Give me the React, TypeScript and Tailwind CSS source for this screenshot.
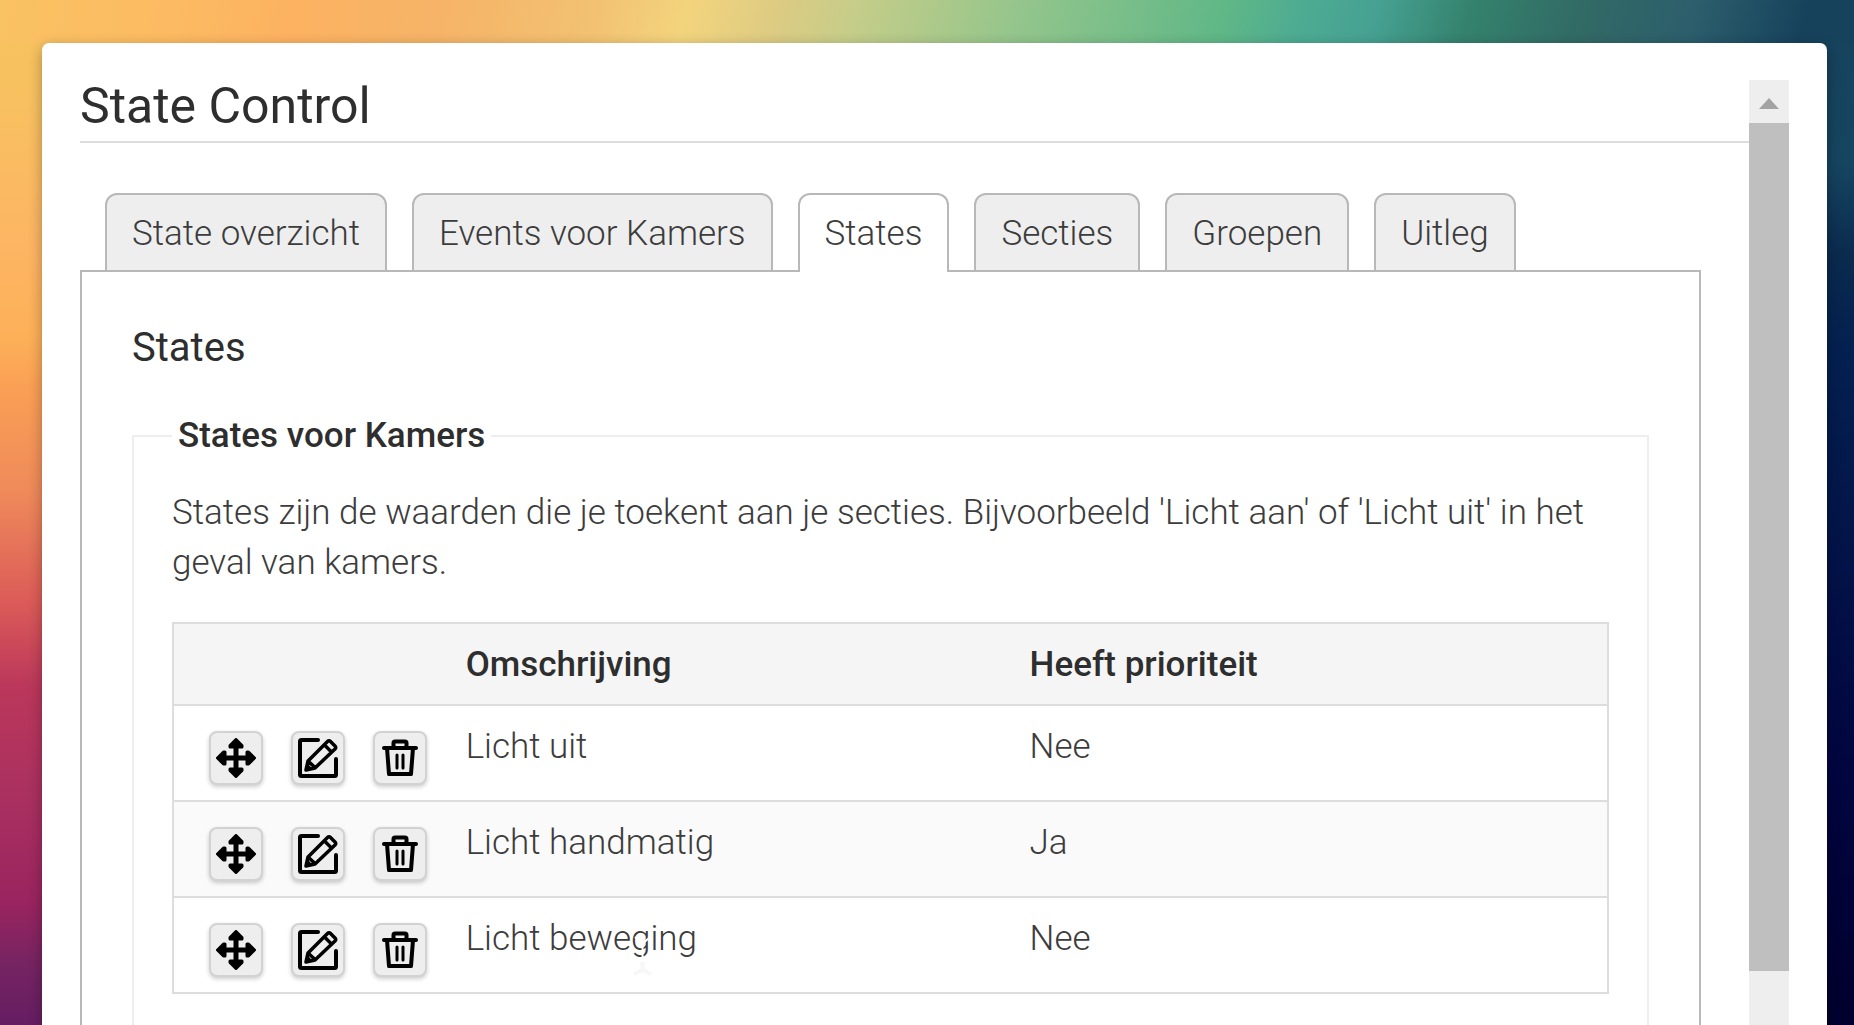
import { useState } from "react";

const tabs = ["State overzicht", "Events voor Kamers", "States", "Secties", "Groepen", "Uitleg"];

const rows = [
  { name: "Licht uit", priority: "Nee", hovered: false },
  { name: "Licht handmatig", priority: "Ja", hovered: false },
  { name: "Licht beweging", priority: "Nee", hovered: true },
];

function MoveIcon() {
  return (
    <svg viewBox="0 0 40 40" className="size-10" aria-hidden="true" strokeLinejoin="round" stroke="#000" strokeWidth="3">
      <path d="M20 4v32M4 20h32" strokeWidth="5" />
      <path d="M20 1.500l6 6v1.500H14V7.500zM20 38.500l6-6V31H14v1.500zM1.500 20l6-6H9v12H7.500zM38.500 20l-6-6H31v12h1.500z" />
    </svg>
  );
}

function EditIcon() {
  return (
    <svg viewBox="0 0 40 40" className="size-10" aria-hidden="true" fill="none" stroke="#000" strokeWidth="4" strokeLinecap="round" strokeLinejoin="round">
      <path d="M20 2H3.500Q2 2 2 3.500v33Q2 38 3.500 38h33q1.500 0 1.500-1.500V21" />
      <path d="M8 32l2-9L29.500 3.500q1.500-1.500 3 0l4.500 4.500q1.500 1.500 0 3L17 30zM26.500 7l7 7M10.500 23.500l6.500 6" strokeWidth="3.500" />
      <path d="M8 32l1.500-5 3.500 3.500z" fill="#000" strokeWidth="2" />
    </svg>
  );
}

function TrashIcon() {
  return (
    <svg viewBox="0 0 40 40" className="size-10" aria-hidden="true" fill="none" stroke="#000" strokeWidth="4" strokeLinecap="round" strokeLinejoin="round">
      <path d="M4 10h32M7 10l2 26h22l2-26M13.500 10V5q0-1.500 1.500-1.500h10q1.500 0 1.500 1.500V10" />
      <path d="M17 17v13M23 17v13" strokeWidth="3" />
    </svg>
  );
}

function TextCursor() {
  return (
    <svg
      viewBox="0 0 21 41"
      className="pointer-events-none absolute top-[38px] left-[186px] h-[41px] w-[21px]"
      aria-hidden="true"
      fill="none"
    >
      <path d="M3 1l7.500 7L18 1M10.500 8v25" stroke="#fff" strokeWidth="2" />
      <path d="M10.500 26v8M2 38l8.500-4 8.500 4" stroke="#f7f7f7" strokeWidth="4" />
    </svg>
  );
}

function IconButton({ label, children }: { label: string; children: React.ReactNode }) {
  return (
    <button
      type="button"
      aria-label={label}
      className="flex size-[54px] items-center justify-center rounded-lg border-2 border-[#d2d2d2] bg-[#eeeeee] shadow-[0_2px_4px_rgba(0,0,0,0.2)]"
    >
      {children}
    </button>
  );
}

export default function App() {
  const [active, setActive] = useState("States");
  return (
    <div className="h-screen overflow-hidden bg-[linear-gradient(105deg,#f9c262_0%,#fcbc62_8%,#fcb261_16%,#f6b468_24%,#f2c172_32%,#f3d47d_37%,#dccb83_42%,#c5cd89_46%,#93c58c_55%,#5fb787_66%,#4dab92_70%,#46a192_74%,#34826d_79%,#326a65_85%,#2c5e6c_91%,#17425c_97%,#17425c_100%),linear-gradient(180deg,#f6c35e_0%,#f8c060_10%,#fdb563_24%,#fdb058_33%,#fa9f55_38%,#ef8a5a_48%,#db5a58_59%,#bb375b_67%,#a93060_78%,#9a245f_88%,#762462_94%,#651d62_100%),linear-gradient(180deg,#17425c_0%,#164560_16%,#0a2a4e_25%,#042050_34%,#020540_75%,#00002e_100%)] bg-[length:100%_43px,50%_100%,50%_100%] bg-[position:0_0,0_0,100%_0] bg-no-repeat pt-[43px] pr-[27px] pl-[42px] font-['Roboto',sans-serif] text-[35px] leading-[50px] font-light text-[#3c3c3c]">
      <main className="flex h-full rounded-t-[7px] bg-white pt-[37px] pr-[38px] pl-[38px] shadow-[0_4px_14px_rgba(0,0,0,0.3)]">
        <div className="min-w-0 flex-1">
          <h1 className="h-[63px] border-b-2 border-[#dddddd] text-[50px] leading-[52px] font-normal text-[#2e2e2e]">
            State Control
          </h1>
          <div className="mt-[50px] mr-12">
            <div role="tablist" className="relative -mb-0.5 flex gap-[25px] pl-[25px]">
              {tabs.map((tab) => (
                <button
                  key={tab}
                  type="button"
                  role="tab"
                  aria-selected={tab === active}
                  onClick={() => setActive(tab)}
                  className={
                    tab === active
                      ? "h-[79px] rounded-t-xl border-2 border-b-0 border-[#b8b8b8] bg-white px-[25px]"
                      : "h-[79px] rounded-t-xl border-2 border-[#b8b8b8] bg-[#eeeeee] px-[25px] pt-0.5"
                  }
                >
                  {tab}
                </button>
              ))}
            </div>
            <section className="border-2 border-[#b8b8b8] px-[50px] pt-[50px]">
              <h2 className="text-[40px] leading-[52px] font-normal text-[#2e2e2e]">States</h2>
              <fieldset className="mt-[37px] min-w-0 border-2 border-[#eeeeee] px-[38px] pb-[60px]">
                <legend className="px-1.5 font-medium text-[#2e2e2e]">States voor Kamers</legend>
                <p className="mt-[27px]">
                  States zijn de waarden die je toekent aan je secties. Bijvoorbeeld 'Licht aan' of 'Licht uit' in het geval van
                  kamers.
                </p>
                <table className="mt-[34px] w-full table-fixed border-collapse border-2 border-[#dddddd] text-left">
                  <colgroup>
                    <col className="w-[19%]" />
                    <col className="w-[39.3%]" />
                    <col />
                  </colgroup>
                  <thead>
                    <tr className="h-[82px] border-b-2 border-[#dddddd] bg-[#f5f5f5] text-[#2e2e2e]">
                      <th aria-label="Acties" />
                      <th className="px-5 pt-0.5 font-medium">Omschrijving</th>
                      <th className="px-5 pt-0.5 font-medium">Heeft prioriteit</th>
                    </tr>
                  </thead>
                  <tbody>
                    {rows.map((row) => (
                      <tr key={row.name} className="h-24 border-b-2 border-[#dddddd] align-top even:bg-[#fafafa]">
                        <td>
                          <div className="flex gap-7 pt-[25px] pl-[35px]">
                            <IconButton label={"Verplaats " + row.name}>
                              <MoveIcon />
                            </IconButton>
                            <IconButton label={"Bewerk " + row.name}>
                              <EditIcon />
                            </IconButton>
                            <IconButton label={"Verwijder " + row.name}>
                              <TrashIcon />
                            </IconButton>
                          </div>
                        </td>
                        <td className="relative px-5 pt-4">
                          {row.name}
                          {row.hovered && <TextCursor />}
                        </td>
                        <td className="px-5 pt-4">{row.priority}</td>
                      </tr>
                    ))}
                  </tbody>
                </table>
              </fieldset>
            </section>
          </div>
        </div>
        <div className="flex w-10 flex-col bg-[#eeeeee]">
          <button type="button" aria-label="Omhoog scrollen" className="flex h-[43px] items-center justify-center pt-1">
            <svg viewBox="0 0 20 11" className="h-[11px] w-5" aria-hidden="true">
              <path d="M10 0l10 11H0z" fill="#a3a3a3" />
            </svg>
          </button>
          <div className="mb-[54px] flex-1 bg-[#bfbfbf]" />
        </div>
      </main>
    </div>
  );
}
